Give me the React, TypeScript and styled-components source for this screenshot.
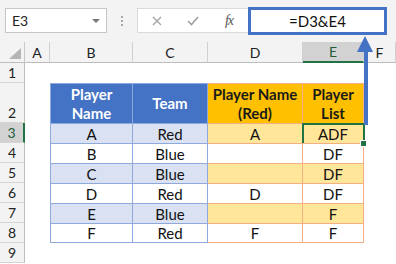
import React from 'react'
import styled, { createGlobalStyle, css } from 'styled-components'

const GlobalStyle = createGlobalStyle`
    body {
        margin: 0;
        font-family: Lato, 'Liberation Sans', sans-serif;
        background: #fff;
    }
`

const BLUE = '#4472c4'
const GREEN = '#217346'

const Page = styled.div`
    position: relative;
    width: 396px;
    height: 264px;
    overflow: hidden;
    background: #fff;
`

const Toolbar = styled.div`
    display: flex;
    align-items: flex-start;
    height: 42px;
    padding: 8px 0 0 5px;
    box-sizing: border-box;
    background: #f3f3f3;
`

const NameBox = styled.div`
    display: flex;
    align-items: center;
    justify-content: space-between;
    width: 102px;
    height: 25px;
    box-sizing: border-box;
    padding: 0 6px 0 6px;
    background: #fff;
    border: 1px solid #c6c6c6;
    font-size: 14px;
    color: #222;
`

const Caret = styled.span`
    width: 0;
    height: 0;
    border-left: 4px solid transparent;
    border-right: 4px solid transparent;
    border-top: 4px solid #777;
`

const Dots = styled.div`
    display: flex;
    flex-direction: column;
    align-items: center;
    justify-content: center;
    gap: 2px;
    width: 30px;
    height: 25px;
    span {
        width: 2px;
        height: 2px;
        background: #a8a8a8;
    }
`

const FxBox = styled.div`
    display: flex;
    align-items: center;
    width: 111px;
    height: 25px;
    box-sizing: border-box;
    background: #fff;
    border: 1px solid #dadada;
    border-right: none;
`

const FxButton = styled.div<{ $w: number }>`
    display: flex;
    align-items: center;
    justify-content: center;
    width: ${p => p.$w}px;
    height: 100%;
`

const FxLabel = styled.span`
    font-family: 'Liberation Serif', serif;
    font-style: italic;
    font-size: 14px;
    color: #555;
    letter-spacing: -1px;
`

const FormulaBox = styled.div`
    display: flex;
    align-items: center;
    justify-content: center;
    width: 139px;
    height: 28px;
    margin-top: -1px;
    box-sizing: border-box;
    border: 3px solid ${BLUE};
    background: #fff;
    font-size: 15px;
    color: #111;
`

const Sheet = styled.div`
    display: grid;
    grid-template-columns: 25px 25px 83px 75px 95px 61px 1fr;
    grid-template-rows: 21px 20px 40px repeat(7, 20px);
`

const Corner = styled.div`
    display: flex;
    align-items: flex-end;
    justify-content: flex-end;
    padding: 0 3px 3px 0;
    background: #f3f3f3;
    border-right: 1px solid #c8c8c8;
    border-bottom: 1px solid #bdbdbd;
`

const ColHead = styled.div<{ $active?: boolean }>`
    display: flex;
    align-items: center;
    justify-content: center;
    background: #f3f3f3;
    border-right: 1px solid #d0d0d0;
    border-bottom: 1px solid #bdbdbd;
    font-size: 14px;
    color: #222;
    box-sizing: border-box;
    ${p =>
        p.$active &&
        css`
            background: #d2d2d2;
            color: #1e5c3a;
            border-bottom: 2px solid ${GREEN};
        `}
`

const RowHead = styled.div<{ $active?: boolean }>`
    display: flex;
    align-items: flex-end;
    justify-content: center;
    padding-bottom: 1px;
    background: #f3f3f3;
    border-right: 1px solid #bdbdbd;
    border-bottom: 1px solid #d4d4d4;
    font-size: 14px;
    color: #222;
    box-sizing: border-box;
    ${p =>
        p.$active &&
        css`
            background: #d2d2d2;
            color: #1e5c3a;
            border-right: 2px solid ${GREEN};
        `}
`

const Blank = styled.div<{ $span?: number }>`
    grid-column: span ${p => p.$span ?? 1};
`

type Tone = 'blue' | 'orange'

const tones = {
    blue: { head: BLUE, band: '#d9e1f2', line: '#8ea9db', headText: '#fff' },
    orange: { head: '#ffc000', band: '#ffe699', line: '#f4b084', headText: '#1a1a1a' },
}

const HeadCell = styled.div<{ $tone: Tone; $first?: boolean }>`
    display: flex;
    align-items: center;
    justify-content: center;
    text-align: center;
    background: ${p => tones[p.$tone].head};
    color: ${p => tones[p.$tone].headText};
    border-top: 1px solid ${p => tones[p.$tone].line};
    border-right: 1px solid ${p => tones[p.$tone].line};
    border-left: ${p => (p.$first ? `1px solid ${tones[p.$tone].line}` : 'none')};
    font-weight: 700;
    font-size: 15px;
    line-height: 19px;
    box-sizing: border-box;
`

type CellProps = {
    $tone: Tone
    $band: boolean
    $first?: boolean
    $last?: boolean
    $selected?: boolean
}

const DataCell = styled.div<CellProps>`
    position: relative;
    display: flex;
    align-items: center;
    justify-content: center;
    background: ${p => (p.$band ? tones[p.$tone].band : '#fff')};
    border-top: 1px solid ${p => tones[p.$tone].line};
    border-right: 1px solid ${p => tones[p.$tone].line};
    border-bottom: ${p => (p.$last ? `1px solid ${tones[p.$tone].line}` : 'none')};
    border-left: ${p => (p.$first ? `1px solid ${tones[p.$tone].line}` : 'none')};
    font-size: 15px;
    color: #111;
    box-sizing: border-box;
    ${p =>
        p.$selected &&
        css`
            &::after {
                content: '';
                position: absolute;
                left: -1px;
                top: -1px;
                right: -2px;
                bottom: -2px;
                border: 2px solid ${GREEN};
            }
            &::before {
                content: '';
                position: absolute;
                right: -4px;
                bottom: -4px;
                width: 5px;
                height: 5px;
                background: ${GREEN};
                border: 1px solid #fff;
                z-index: 2;
            }
        `}
`

const Arrow = styled.svg`
    position: absolute;
    left: 356px;
    top: 35px;
`

const rows = [
    ['A', 'Red', 'A', 'ADF'],
    ['B', 'Blue', '', 'DF'],
    ['C', 'Blue', '', 'DF'],
    ['D', 'Red', 'D', 'DF'],
    ['E', 'Blue', '', 'F'],
    ['F', 'Red', 'F', 'F'],
]

const cols = ['A', 'B', 'C', 'D', 'E', 'F']

const App = () => {
    return (
        <Page>
            <GlobalStyle />
            <Toolbar>
                <NameBox>
                    E3
                    <Caret />
                </NameBox>
                <Dots>
                    <span />
                    <span />
                    <span />
                </Dots>
                <FxBox>
                    <FxButton $w={38}>
                        <svg width="10" height="10" viewBox="0 0 10 10">
                            <path d="M1 1 L9 9 M9 1 L1 9" stroke="#a0a0a0" strokeWidth="1.2" />
                        </svg>
                    </FxButton>
                    <FxButton $w={34}>
                        <svg width="12" height="10" viewBox="0 0 12 10">
                            <path d="M1 5 L4.5 8.5 L11 1" stroke="#a0a0a0" strokeWidth="1.6" fill="none" />
                        </svg>
                    </FxButton>
                    <FxButton $w={38}>
                        <FxLabel>fx</FxLabel>
                    </FxButton>
                </FxBox>
                <FormulaBox>=D3&amp;E4</FormulaBox>
            </Toolbar>
            <Sheet>
                <Corner>
                    <svg width="12" height="11" viewBox="0 0 12 11">
                        <polygon points="12,0 12,11 0,11" fill="#b4b4b4" />
                    </svg>
                </Corner>
                {cols.map(c => (
                    <ColHead key={c} $active={c === 'E'}>
                        {c}
                    </ColHead>
                ))}

                <RowHead>1</RowHead>
                <Blank $span={6} />

                <RowHead>2</RowHead>
                <Blank />
                <HeadCell $tone="blue" $first>
                    Player
                    <br />
                    Name
                </HeadCell>
                <HeadCell $tone="blue">Team</HeadCell>
                <HeadCell $tone="orange">
                    Player Name
                    <br />
                    (Red)
                </HeadCell>
                <HeadCell $tone="orange">
                    Player
                    <br />
                    List
                </HeadCell>
                <Blank />

                {rows.map((r, i) => {
                    const band = i % 2 === 0
                    const last = i === rows.length - 1
                    return (
                        <React.Fragment key={i}>
                            <RowHead $active={i === 0}>{i + 3}</RowHead>
                            <Blank />
                            <DataCell $tone="blue" $band={band} $first $last={last}>
                                {r[0]}
                            </DataCell>
                            <DataCell $tone="blue" $band={band} $last={last}>
                                {r[1]}
                            </DataCell>
                            <DataCell $tone="orange" $band={band} $last={last}>
                                {r[2]}
                            </DataCell>
                            <DataCell $tone="orange" $band={band} $last={last} $selected={i === 0}>
                                {r[3]}
                            </DataCell>
                            <Blank />
                        </React.Fragment>
                    )
                })}

                <RowHead>9</RowHead>
                <Blank $span={6} />
            </Sheet>
            <Arrow width="18" height="92" viewBox="0 0 18 92">
                <polygon points="9,1 17,17 1,17" fill={BLUE} />
                <rect x="8" y="16" width="4" height="74" fill={BLUE} />
            </Arrow>
        </Page>
    )
}

export default App
